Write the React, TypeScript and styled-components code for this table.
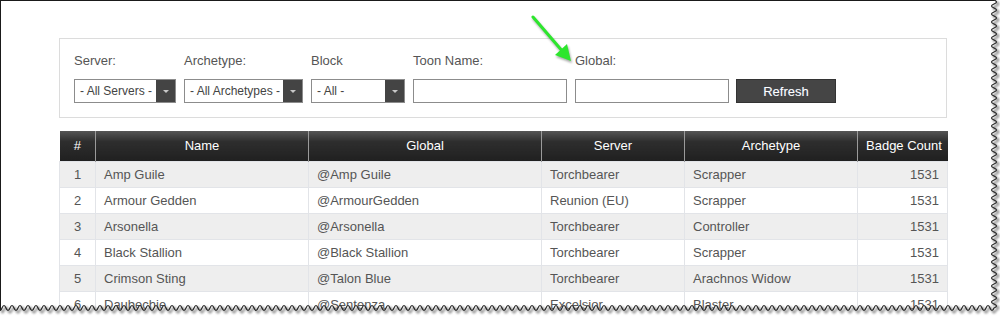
import React from 'react';
import styled, { createGlobalStyle } from 'styled-components';

const GlobalStyle = createGlobalStyle`
  html, body {
    margin: 0;
    padding: 0;
    background: #fff;
  }
  body {
    font-family: 'Liberation Sans', Arial, sans-serif;
  }
`;

const Screen = styled.div`
  position: relative;
  width: 1000px;
  height: 316px;
  overflow: hidden;
  background: #fff;
`;

const Frame = styled.div`
  box-sizing: border-box;
  width: 996px;
  height: 316px;
  border-top: 1px solid #1a1a1a;
  border-left: 1px solid #1a1a1a;
  padding: 37px 0 0 58px;
`;

const Content = styled.div`
  width: 888px;
`;

const FilterPanel = styled.div`
  box-sizing: border-box;
  height: 80px;
  border: 1px solid #dcdcdc;
  padding: 14px 14px;
  display: flex;
  align-items: flex-end;
  gap: 8px;
`;

const Field = styled.div`
  display: flex;
  flex-direction: column;
  gap: 10px;
`;

const Label = styled.label`
  font-size: 13px;
  line-height: 16px;
  color: #555;
`;

const SelectBox = styled.div<{ $width: number }>`
  box-sizing: border-box;
  width: ${(p) => p.$width}px;
  height: 24px;
  border: 1px solid #8c8c8c;
  display: flex;
  background: #fff;
`;

const SelectText = styled.span`
  flex: 1;
  padding-left: 5px;
  font-size: 12px;
  line-height: 22px;
  color: #444;
  white-space: nowrap;
`;

const SelectArrow = styled.span`
  width: 19px;
  background: #444;
  display: flex;
  align-items: center;
  justify-content: center;
  &::after {
    content: '';
    border-left: 3px solid transparent;
    border-right: 3px solid transparent;
    border-top: 3px solid #c8c8c8;
  }
`;

const TextInput = styled.input`
  box-sizing: border-box;
  width: 154px;
  height: 24px;
  margin: 0;
  border: 1px solid #8c8c8c;
  padding: 0 5px;
  font-family: inherit;
  font-size: 12px;
  outline: none;
`;

const RefreshButton = styled.button`
  box-sizing: border-box;
  width: 100px;
  height: 24px;
  margin-left: -1px;
  border: 1px solid #333;
  background: #454545;
  color: #fff;
  font-family: inherit;
  font-size: 13px;
  text-shadow: 0 0 1px rgba(140, 180, 255, 0.4);
  cursor: pointer;
`;

const Table = styled.table`
  margin-top: 13px;
  width: 888px;
  border-collapse: collapse;
  table-layout: fixed;
  font-size: 13px;
`;

const Th = styled.th<{ $width: number }>`
  width: ${(p) => p.$width}px;
  height: 30px;
  padding: 0 8px;
  box-sizing: border-box;
  background: linear-gradient(#555 0%, #2e2e2e 35%, #202020 100%);
  color: #fff;
  font-weight: normal;
  text-align: center;
  border-left: 1px solid #9a9a9a;
  white-space: nowrap;
  &:first-child {
    border-left: none;
  }
`;

const Tr = styled.tr<{ $odd: boolean }>`
  background: ${(p) => (p.$odd ? '#eeeeee' : '#fff')};
`;

const Td = styled.td<{ $align?: 'left' | 'center' | 'right' }>`
  height: 26px;
  padding: 0 8px;
  box-sizing: border-box;
  border: 1px solid #e2e4e8;
  color: #555;
  text-align: ${(p) => p.$align || 'left'};
  white-space: nowrap;
`;

const Overlay = styled.svg`
  position: absolute;
  top: 0;
  left: 0;
  pointer-events: none;
`;

const Pointer = styled.svg`
  position: absolute;
  left: 525px;
  top: 10px;
  filter: drop-shadow(1px 2px 1px rgba(0, 0, 0, 0.35));
`;

const columns = [
  { title: '#', width: 36 },
  { title: 'Name', width: 213 },
  { title: 'Global', width: 233 },
  { title: 'Server', width: 143 },
  { title: 'Archetype', width: 173 },
  { title: 'Badge Count', width: 90 },
];

const rows = [
  ['1', 'Amp Guile', '@Amp Guile', 'Torchbearer', 'Scrapper', '1531'],
  ['2', 'Armour Gedden', '@ArmourGedden', 'Reunion (EU)', 'Scrapper', '1531'],
  ['3', 'Arsonella', '@Arsonella', 'Torchbearer', 'Controller', '1531'],
  ['4', 'Black Stallion', '@Black Stallion', 'Torchbearer', 'Scrapper', '1531'],
  ['5', 'Crimson Sting', '@Talon Blue', 'Torchbearer', 'Arachnos Widow', '1531'],
  ['6', 'Daubechie', '@Sentenza', 'Excelsior', 'Blaster', '1531'],
];

// torn paper edge: wavy right side, then wavy bottom
const tornEdge = () => {
  const rx = 994;
  const by = 308;
  const step = 4;
  let d = `M${rx} 0`;
  let i = 0;
  for (let y = 0; y < by; y += step, i++) {
    const cx = i % 2 ? rx - 5 : rx + 5;
    d += ` Q${cx} ${y + step / 2} ${rx} ${Math.min(y + step, by)}`;
  }
  i = 0;
  for (let x = rx; x > 0; x -= step, i++) {
    const cy = i % 2 ? by - 5 : by + 5;
    d += ` Q${x - step / 2} ${cy} ${Math.max(x - step, 0)} ${by}`;
  }
  return d;
};

const TornFrame = () => {
  const edge = tornEdge();
  return (
    <Overlay width={1000} height={316} viewBox="0 0 1000 316">
      <defs>
        <filter id="soft" x="-5%" y="-5%" width="110%" height="110%">
          <feGaussianBlur stdDeviation="1.2" />
        </filter>
      </defs>
      <path d={`${edge} L0 316 L1000 316 L1000 0 Z`} fill="#fff" />
      <path
        d={edge}
        transform="translate(2 2)"
        fill="none"
        stroke="#8a8a8a"
        strokeWidth={2}
        filter="url(#soft)"
      />
      <path d={edge} fill="none" stroke="#222" strokeWidth={1.2} />
    </Overlay>
  );
};

const GreenArrow = () => (
  <Pointer width={60} height={60} viewBox="0 0 60 60">
    <line x1={8} y1={7} x2={39} y2={43} stroke="#2de62d" strokeWidth={3} strokeLinecap="round" />
    <polygon points="46,51 30,45 42,34" fill="#2de62d" />
  </Pointer>
);

const App = () => {
  return (
    <Screen>
      <GlobalStyle />
      <Frame>
        <Content>
          <FilterPanel>
            <Field>
              <Label>Server:</Label>
              <SelectBox $width={102}>
                <SelectText>- All Servers -</SelectText>
                <SelectArrow />
              </SelectBox>
            </Field>
            <Field>
              <Label>Archetype:</Label>
              <SelectBox $width={119}>
                <SelectText>- All Archetypes -</SelectText>
                <SelectArrow />
              </SelectBox>
            </Field>
            <Field>
              <Label>Block</Label>
              <SelectBox $width={94}>
                <SelectText>- All -</SelectText>
                <SelectArrow />
              </SelectBox>
            </Field>
            <Field>
              <Label>Toon Name:</Label>
              <TextInput />
            </Field>
            <Field>
              <Label>Global:</Label>
              <TextInput />
            </Field>
            <RefreshButton>Refresh</RefreshButton>
          </FilterPanel>
          <Table>
            <thead>
              <tr>
                {columns.map((c) => (
                  <Th key={c.title} $width={c.width}>
                    {c.title}
                  </Th>
                ))}
              </tr>
            </thead>
            <tbody>
              {rows.map((r, idx) => (
                <Tr key={r[0]} $odd={idx % 2 === 0}>
                  <Td $align="center">{r[0]}</Td>
                  <Td>{r[1]}</Td>
                  <Td>{r[2]}</Td>
                  <Td>{r[3]}</Td>
                  <Td>{r[4]}</Td>
                  <Td $align="right">{r[5]}</Td>
                </Tr>
              ))}
            </tbody>
          </Table>
        </Content>
      </Frame>
      <GreenArrow />
      <TornFrame />
    </Screen>
  );
};

export default App;
